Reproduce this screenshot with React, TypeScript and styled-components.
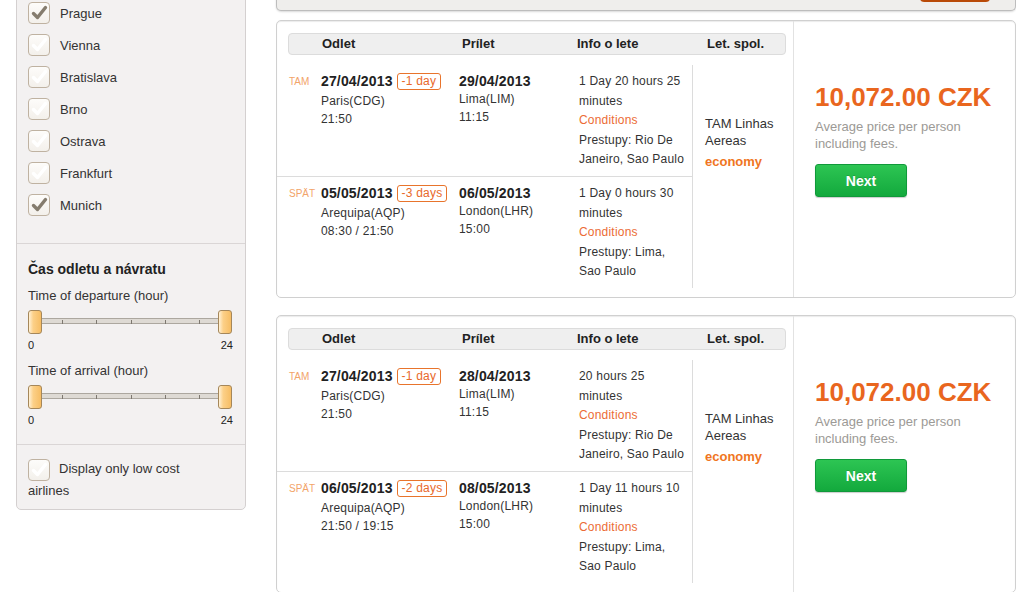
import React from "react";
import styled, { createGlobalStyle } from "styled-components";

const GlobalStyle = createGlobalStyle`
  body {
    margin: 0;
    background: #fff;
    font-family: "Liberation Sans", Arial, sans-serif;
    color: #333;
    overflow: hidden;
  }
`;

const Page = styled.div`
  display: flex;
  align-items: flex-start;
  gap: 30px;
  padding-left: 16px;
  margin-top: -30px;
`;

/* ---------- sidebar ---------- */

const Sidebar = styled.aside`
  width: 230px;
  flex-shrink: 0;
  box-sizing: border-box;
  background: #f3f1f1;
  border: 1px solid #d4d0d0;
  border-radius: 0 0 5px 5px;
`;

const CityList = styled.div`
  padding: 26px 12px 22px 11px;
`;

const CityRow = styled.label`
  display: flex;
  align-items: center;
  gap: 10px;
  height: 32px;
  font-size: 13px;
  color: #333;
`;

const Box = styled.span`
  display: inline-block;
  vertical-align: middle;
  width: 22px;
  height: 22px;
  box-sizing: border-box;
  border: 1px solid #bfb2a1;
  border-radius: 4px;
  background: linear-gradient(#fdfcfa, #f3f0eb);
  flex-shrink: 0;

  svg {
    display: block;
  }
`;

const Section = styled.div`
  border-top: 1px solid #dad6d6;
  padding: 16px 12px 17px 11px;
`;

const Heading = styled.h3`
  margin: 0 0 9px;
  font-size: 14px;
  line-height: 18px;
  font-weight: bold;
  color: #222;
`;

const SliderLabel = styled.div<{ $gap?: number }>`
  font-size: 13px;
  line-height: 18px;
  color: #333;
  margin-top: ${(p) => p.$gap ?? 0}px;
`;

const Slider = styled.div`
  position: relative;
  height: 24px;
  margin-top: 5px;
`;

const Track = styled.div`
  position: absolute;
  left: 7px;
  right: 7px;
  top: 8px;
  height: 6px;
  box-sizing: border-box;
  background: #dedad4;
  border-top: 1px solid #aca79f;
  border-bottom: 1px solid #aca79f;
`;

const Tick = styled.span`
  position: absolute;
  top: 10px;
  width: 1px;
  height: 4px;
  background: #7d7870;
`;

const Handle = styled.span<{ $side: "left" | "right" }>`
  position: absolute;
  top: 0;
  ${(p) => (p.$side === "left" ? "left: 0;" : "right: 1px;")}
  width: 14px;
  height: 24px;
  box-sizing: border-box;
  border: 1px solid #a5875a;
  border-radius: 3px;
  background: linear-gradient(90deg, #fff1d6 0%, #fcd088 35%, #f6bd64 100%);
`;

const Scale = styled.div`
  display: flex;
  justify-content: space-between;
  margin-top: 4px;
  font-size: 11px;
  line-height: 14px;
  color: #222;
`;

const LowCost = styled.label`
  display: block;
  border-top: 1px solid #dad6d6;
  padding: 14px 40px 8px 11px;
  font-size: 13px;
  line-height: 20px;
  color: #333;

  ${Box} {
    margin-right: 9px;
  }
`;

/* ---------- results ---------- */

const Main = styled.main`
  flex: 1;
  display: flex;
  flex-direction: column;
  gap: 9px;
`;

const TopBar = styled.div`
  height: 41px;
  box-sizing: border-box;
  display: flex;
  justify-content: flex-end;
  align-items: flex-end;
  padding: 0 25px 8px 0;
  background: #efeeec;
  border: 1px solid #bdbdbd;
  border-top: 0;
  border-radius: 0 0 5px 5px;
  box-shadow: 0 1px 2px rgba(0, 0, 0, 0.15);
`;

const SearchButton = styled.button`
  width: 70px;
  height: 28px;
  border: 0;
  border-bottom: 2px solid #b94a08;
  border-radius: 4px;
  background: #f06a12;
`;

const ResultList = styled.div`
  display: flex;
  flex-direction: column;
  gap: 17px;
`;

const Card = styled.div`
  display: flex;
  height: 278px;
  box-sizing: border-box;
  background: #fff;
  border: 1px solid #d0d0d0;
  border-radius: 5px;
  box-shadow: inset 0 1px 1px rgba(0, 0, 0, 0.08);
`;

const FlightsPanel = styled.div`
  width: 516px;
  flex-shrink: 0;
  border-right: 1px solid #e2e2e2;
  padding: 12px 0 9px;
`;

const HeaderBar = styled.div`
  display: grid;
  grid-template-columns: 33px 140px 115px 130px 1fr;
  margin: 0 7px 0 11px;
  height: 22px;
  box-sizing: border-box;
  background: #efefef;
  border: 1px solid #dcdcdc;
  border-radius: 4px;
  font-size: 13px;
  font-weight: bold;
  line-height: 20px;
  color: #222;
`;

const Body = styled.div`
  display: flex;
  margin-top: 10px;
`;

const Legs = styled.div`
  width: 415px;
`;

const Leg = styled.div`
  display: grid;
  grid-template-columns: 44px 138px 120px 106px;
  padding: 7px 0 6.5px;
  font-size: 12px;
  letter-spacing: 0.2px;
  color: #333;

  & + & {
    border-top: 1px solid #dcdcdc;
  }
`;

const Direction = styled.div`
  padding-left: 12px;
  font-size: 10px;
  letter-spacing: 0;
  line-height: 19.5px;
  color: #f2a46a;
`;

const Col = styled.div`
  line-height: 18px;
`;

const DateLine = styled.div<{ $tall?: boolean }>`
  font-size: 14px;
  font-weight: bold;
  letter-spacing: 0.15px;
  color: #222;
  line-height: 18px;
  margin-bottom: ${(p) => (p.$tall ? 2 : 0)}px;
`;

const Shift = styled.span`
  display: inline-block;
  vertical-align: middle;
  margin: -2px 0 0 4px;
  padding: 0 4px;
  border: 1px solid #e8742c;
  border-radius: 3px;
  font-size: 12px;
  font-weight: normal;
  letter-spacing: 0.2px;
  line-height: 15px;
  color: #e8692a;
`;

const Info = styled.div`
  line-height: 19.5px;
`;

const Conditions = styled.a`
  display: block;
  color: #ec6c35;
  text-decoration: none;
`;

const Airline = styled.div`
  flex: 1;
  border-left: 1px solid #dcdcdc;
  padding: 49.5px 0 0 12px;
  font-size: 13px;
  line-height: 17px;
  color: #333;
`;

const Cabin = styled.div`
  margin-top: 4px;
  font-weight: bold;
  color: #f07522;
`;

const PricePanel = styled.div`
  flex: 1;
  padding: 61px 0 0 21px;
`;

const Price = styled.div`
  font-size: 26px;
  font-weight: bold;
  line-height: 30px;
  color: #e9661e;
`;

const PriceNote = styled.div`
  margin-top: 6px;
  font-size: 13px;
  line-height: 17px;
  color: #9c9a96;
`;

const NextButton = styled.button`
  display: block;
  margin-top: 12px;
  width: 92px;
  height: 33px;
  border: 1px solid #10993a;
  border-radius: 3px;
  background: linear-gradient(#2dc553, #13a93d);
  box-shadow: 0 1px 1px rgba(0, 0, 0, 0.2);
  color: #fff;
  font: bold 14px "Liberation Sans", Arial, sans-serif;
  text-shadow: 0 -1px 0 rgba(0, 0, 0, 0.15);
`;

const Check = ({ checked }: { checked?: boolean }) => (
  <Box>
    <svg width="20" height="20" viewBox="0 0 20 20">
      <path
        d="M4.5 10.5 L8.5 14.5 L16.5 4.5"
        fill="none"
        stroke={checked ? "#857c6e" : "#ffffff"}
        strokeWidth="3.4"
        strokeLinecap="round"
        strokeLinejoin="round"
      />
    </svg>
  </Box>
);

const RangeSlider = () => (
  <>
    <Slider>
      <Track />
      {[1, 2, 3, 4, 5].map((i) => (
        <Tick key={i} style={{ left: `${(i / 6) * 100}%` }} />
      ))}
      <Handle $side="left" />
      <Handle $side="right" />
    </Slider>
    <Scale>
      <span>0</span>
      <span>24</span>
    </Scale>
  </>
);

interface LegData {
  dir: string;
  depDate: string;
  shift: string;
  depCity: string;
  depTime: string;
  arrDate: string;
  arrCity: string;
  arrTime: string;
  duration: string;
  stops: string;
}

const results: LegData[][] = [
  [
    {
      dir: "TAM",
      depDate: "27/04/2013",
      shift: "-1 day",
      depCity: "Paris(CDG)",
      depTime: "21:50",
      arrDate: "29/04/2013",
      arrCity: "Lima(LIM)",
      arrTime: "11:15",
      duration: "1 Day 20 hours 25 minutes",
      stops: "Prestupy: Rio De Janeiro, Sao Paulo",
    },
    {
      dir: "SPÄT",
      depDate: "05/05/2013",
      shift: "-3 days",
      depCity: "Arequipa(AQP)",
      depTime: "08:30 / 21:50",
      arrDate: "06/05/2013",
      arrCity: "London(LHR)",
      arrTime: "15:00",
      duration: "1 Day 0 hours 30 minutes",
      stops: "Prestupy: Lima, Sao Paulo",
    },
  ],
  [
    {
      dir: "TAM",
      depDate: "27/04/2013",
      shift: "-1 day",
      depCity: "Paris(CDG)",
      depTime: "21:50",
      arrDate: "28/04/2013",
      arrCity: "Lima(LIM)",
      arrTime: "11:15",
      duration: "20 hours 25 minutes",
      stops: "Prestupy: Rio De Janeiro, Sao Paulo",
    },
    {
      dir: "SPÄT",
      depDate: "06/05/2013",
      shift: "-2 days",
      depCity: "Arequipa(AQP)",
      depTime: "21:50 / 19:15",
      arrDate: "08/05/2013",
      arrCity: "London(LHR)",
      arrTime: "15:00",
      duration: "1 Day 11 hours 10 minutes",
      stops: "Prestupy: Lima, Sao Paulo",
    },
  ],
];

const cities: [string, boolean][] = [
  ["Prague", true],
  ["Vienna", false],
  ["Bratislava", false],
  ["Brno", false],
  ["Ostrava", false],
  ["Frankfurt", false],
  ["Munich", true],
];

export default function App() {
  return (
    <>
      <GlobalStyle />
      <Page>
        <Sidebar>
          <CityList>
            {cities.map(([name, on]) => (
              <CityRow key={name}>
                <Check checked={on} />
                {name}
              </CityRow>
            ))}
          </CityList>
          <Section>
            <Heading>Čas odletu a návratu</Heading>
            <SliderLabel>Time of departure (hour)</SliderLabel>
            <RangeSlider />
            <SliderLabel $gap={10}>Time of arrival (hour)</SliderLabel>
            <RangeSlider />
          </Section>
          <LowCost>
            <Check />
            Display only low cost airlines
          </LowCost>
        </Sidebar>

        <Main>
          <TopBar>
            <SearchButton aria-label="Hledat" />
          </TopBar>
          <ResultList>
            {results.map((legs, i) => (
              <Card key={i}>
                <FlightsPanel>
                  <HeaderBar>
                    <span />
                    <span>Odlet</span>
                    <span>Prílet</span>
                    <span>Info o lete</span>
                    <span>Let. spol.</span>
                  </HeaderBar>
                  <Body>
                    <Legs>
                      {legs.map((leg) => (
                        <Leg key={leg.dir}>
                          <Direction>{leg.dir}</Direction>
                          <Col>
                            <DateLine $tall>
                              {leg.depDate}
                              <Shift>{leg.shift}</Shift>
                            </DateLine>
                            <div>{leg.depCity}</div>
                            <div>{leg.depTime}</div>
                          </Col>
                          <Col>
                            <DateLine>{leg.arrDate}</DateLine>
                            <div>{leg.arrCity}</div>
                            <div>{leg.arrTime}</div>
                          </Col>
                          <Info>
                            <div>{leg.duration}</div>
                            <Conditions href="#">Conditions</Conditions>
                            <div>{leg.stops}</div>
                          </Info>
                        </Leg>
                      ))}
                    </Legs>
                    <Airline>
                      TAM Linhas Aereas
                      <Cabin>economy</Cabin>
                    </Airline>
                  </Body>
                </FlightsPanel>
                <PricePanel>
                  <Price>10,072.00 CZK</Price>
                  <PriceNote>
                    Average price per person
                    <br />
                    including fees.
                  </PriceNote>
                  <NextButton>Next</NextButton>
                </PricePanel>
              </Card>
            ))}
          </ResultList>
        </Main>
      </Page>
    </>
  );
}
